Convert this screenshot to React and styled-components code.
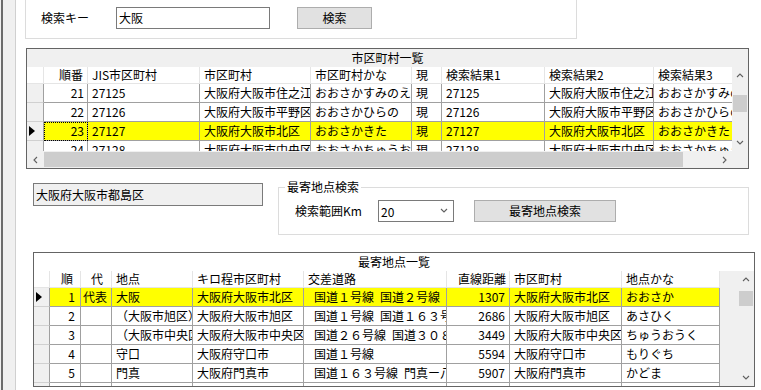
import React from 'react';
import styled, { createGlobalStyle } from 'styled-components';

const GlobalStyle = createGlobalStyle`
  html, body {
    margin: 0;
    padding: 0;
    background: #fff;
  }
  body {
    font-family: "Noto Sans CJK JP", "Noto Sans", sans-serif;
    font-size: 12px;
    color: #000;
  }
  * {
    box-sizing: border-box;
  }
`;

const Window = styled.div`
  display: flex;
  width: 761px;
  height: 390px;
  overflow: hidden;
  background: #fff;
`;

const SideStrip = styled.div`
  flex: 0 0 16px;
  background: linear-gradient(
    to right,
    #f0f0f0 0 1px,
    #6b6b6b 1px 3px,
    #f0f0f0 3px 15px,
    #d0d0d0 15px 16px
  );
`;

const Content = styled.div`
  flex: 1;
  display: flex;
  flex-direction: column;
  align-items: flex-start;
`;

/* ---------- top search group ---------- */

const KeyGroup = styled.div`
  margin-left: 9px;
  width: 552px;
  height: 39px;
  border: 1px solid #dcdcdc;
  border-top: none;
  display: flex;
  align-items: flex-start;
  padding: 7px 0 0 15px;
`;

const FieldLabel = styled.div`
  flex: 0 0 ${p => p.$width}px;
  line-height: 22px;
  white-space: nowrap;
`;

const TextBox = styled.div`
  width: ${p => p.$width}px;
  height: ${p => p.$height || 22}px;
  margin-top: ${p => p.$top || 0}px;
  border: 1px solid #7a7a7a;
  background: ${p => (p.$readOnly ? '#f0f0f0' : '#fff')};
  padding-left: 2px;
  line-height: ${p => (p.$height || 22) - 2}px;
  white-space: nowrap;
  overflow: hidden;
`;

const Button = styled.div`
  width: ${p => p.$width}px;
  height: 22px;
  margin-left: ${p => p.$gap}px;
  background: #e1e1e1;
  border: 1px solid #adadad;
  text-align: center;
  line-height: 20px;
  white-space: nowrap;
`;

/* ---------- data grid ---------- */

const Frame = styled.div`
  margin-left: ${p => p.$left}px;
  margin-top: ${p => p.$top}px;
  width: ${p => p.$width}px;
  height: ${p => p.$height}px;
  border: 1px solid #646464;
  display: flex;
  flex-direction: column;
  overflow: hidden;
  background: #f0f0f0;
`;

const TitleBand = styled.div`
  flex: 0 0 ${p => p.$h}px;
  background: ${p => p.$bg};
  text-align: center;
  line-height: ${p => p.$h}px;
`;

const GridBody = styled.div`
  flex: 1;
  min-height: 0;
  display: grid;
  grid-template-columns: 1fr 16px;
  grid-template-rows: ${p => (p.$hasH ? '1fr 17px' : '1fr')};
`;

const Viewport = styled.div`
  overflow: hidden;
  min-width: 0;
  min-height: 0;
`;

const Row = styled.div`
  display: grid;
  width: max-content;
  grid-template-columns: ${p => p.$cols};
`;

const HeadCell = styled.div`
  height: ${p => p.$h}px;
  line-height: ${p => p.$h - 1}px;
  background: #fff;
  border-right: 1px solid #e5e5e5;
  border-bottom: 1px solid #e5e5e5;
  text-align: ${p => p.$align || 'left'};
  padding: ${p => (p.$align === 'right' ? `0 ${p.$pad ?? 4}px 0 0` : '0 0 0 4px')};
  white-space: nowrap;
  overflow: hidden;
`;

const RowHead = styled.div`
  height: 19px;
  background: #f0f0f0;
  border-right: 1px solid #a0a0a0;
  border-bottom: 1px solid #d0d0d0;
  display: flex;
  align-items: center;
  padding-left: 2px;
`;

const Cell = styled.div`
  height: 19px;
  line-height: 18px;
  background: ${p => (p.$selected ? '#ffff00' : '#fff')};
  border-right: 1px solid #a0a0a0;
  border-bottom: 1px solid #a0a0a0;
  text-align: ${p => p.$align || 'left'};
  padding: ${p => (p.$align === 'right' ? `0 ${p.$pad ?? 3}px 0 0` : '0 0 0 4px')};
  white-space: pre;
  overflow: hidden;
  outline: ${p => (p.$focus ? '1px dotted #000' : 'none')};
  outline-offset: -1px;
`;

/* ---------- scroll bars ---------- */

const VBar = styled.div`
  display: flex;
  flex-direction: column;
  background: #f0f0f0;
  min-height: 0;
`;

const HBar = styled.div`
  display: flex;
  background: #f0f0f0;
  min-width: 0;
`;

const ArrowButton = styled.div`
  flex: 0 0 17px;
  display: flex;
  align-items: center;
  justify-content: center;
`;

const VTrack = styled.div`
  flex: 1;
  padding: ${p => p.$offset}px 1px 0;
`;

const HTrack = styled.div`
  flex: 1;
  padding: 1px 0 1px ${p => p.$offset}px;
`;

const Thumb = styled.div`
  background: #cdcdcd;
  width: ${p => (p.$horizontal ? `${p.$size}px` : '100%')};
  height: ${p => (p.$horizontal ? '100%' : `${p.$size}px`)};
`;

const Corner = styled.div`
  background: #f0f0f0;
`;

const Chevron = ({ dir }) => {
  const pts = {
    up: '1,5 4,2 7,5',
    down: '1,2 4,5 7,2',
    left: '5,1 2,4 5,7',
    right: '3,1 6,4 3,7',
  }[dir];
  return (
    <svg width="8" height="8" viewBox="0 0 8 8">
      <polyline points={pts} fill="none" stroke="#606060" strokeWidth="1.1" />
    </svg>
  );
};

const Marker = () => (
  <svg width="6" height="10" viewBox="0 0 6 10">
    <polygon points="0,0 6,5 0,10" fill="#000" />
  </svg>
);

function VScrollBar({ offset, size }) {
  return (
    <VBar>
      <ArrowButton><Chevron dir="up" /></ArrowButton>
      <VTrack $offset={offset}><Thumb $size={size} /></VTrack>
      <ArrowButton><Chevron dir="down" /></ArrowButton>
    </VBar>
  );
}

function HScrollBar({ offset, size }) {
  return (
    <HBar>
      <ArrowButton><Chevron dir="left" /></ArrowButton>
      <HTrack $offset={offset}><Thumb $horizontal $size={size} /></HTrack>
      <ArrowButton><Chevron dir="right" /></ArrowButton>
    </HBar>
  );
}

function DataGrid({
  title, titleBg, titleHeight, headHeight, rowHeadWidth, columns, rows,
  selected, focusKey, left, top, width, height, vThumb, hThumb,
}) {
  const cols = [rowHeadWidth, ...columns.map(c => c.width)].map(w => `${w}px`).join(' ');
  return (
    <Frame $left={left} $top={top} $width={width} $height={height}>
      <TitleBand $bg={titleBg} $h={titleHeight}>{title}</TitleBand>
      <GridBody $hasH={!!hThumb}>
        <Viewport>
          <Row $cols={cols}>
            <HeadCell $h={headHeight} />
            {columns.map(c => (
              <HeadCell key={c.key} $h={headHeight} $align={c.align} $pad={c.headPad}>
                {c.label}
              </HeadCell>
            ))}
          </Row>
          {rows.map((r, i) => (
            <Row key={i} $cols={cols}>
              <RowHead>{i === selected && <Marker />}</RowHead>
              {columns.map(c => (
                <Cell
                  key={c.key}
                  $align={c.align}
                  $pad={c.pad}
                  $selected={i === selected}
                  $focus={i === selected && c.key === focusKey}
                >
                  {r[c.key] || ''}
                </Cell>
              ))}
            </Row>
          ))}
        </Viewport>
        <VScrollBar offset={vThumb.offset} size={vThumb.size} />
        {hThumb && <HScrollBar offset={hThumb.offset} size={hThumb.size} />}
        {hThumb && <Corner />}
      </GridBody>
    </Frame>
  );
}

/* ---------- nearest point group ---------- */

const MidRow = styled.div`
  display: flex;
  align-items: flex-start;
  margin: 11px 0 0 17px;
`;

const GroupBox = styled.fieldset`
  margin: 0 0 0 15px;
  width: 471px;
  border: 1px solid #dcdcdc;
  padding: 0 0 12px 6px;
  min-inline-size: 0;
`;

const GroupTitle = styled.legend`
  padding: 0 2px;
  line-height: 14px;
  font-size: 12px;
`;

const GroupRow = styled.div`
  display: flex;
  align-items: center;
  margin: 6px 0 0 10px;
`;

const Combo = styled.div`
  width: 76px;
  height: 22px;
  border: 1px solid #7a7a7a;
  background: #fff;
  display: flex;
  align-items: center;
  justify-content: space-between;
  padding: 0 5px 0 2px;
`;

/* ---------- data ---------- */

const cityColumns = [
  { key: 'no', label: '順番', width: 44, align: 'right', pad: 3, headPad: 4 },
  { key: 'jis', label: 'JIS市区町村', width: 112 },
  { key: 'city', label: '市区町村', width: 111 },
  { key: 'kana', label: '市区町村かな', width: 101 },
  { key: 'cur', label: '現', width: 30 },
  { key: 'r1', label: '検索結果1', width: 103 },
  { key: 'r2', label: '検索結果2', width: 109 },
  { key: 'r3', label: '検索結果3', width: 100 },
];

const cityRows = [
  { no: '21', jis: '27125', city: '大阪府大阪市住之江区', kana: 'おおさかすみのえく', cur: '現', r1: '27125', r2: '大阪府大阪市住之江区', r3: 'おおさかすみのえく' },
  { no: '22', jis: '27126', city: '大阪府大阪市平野区', kana: 'おおさかひらの', cur: '現', r1: '27126', r2: '大阪府大阪市平野区', r3: 'おおさかひらの' },
  { no: '23', jis: '27127', city: '大阪府大阪市北区', kana: 'おおさかきた', cur: '現', r1: '27127', r2: '大阪府大阪市北区', r3: 'おおさかきた' },
  { no: '24', jis: '27128', city: '大阪府大阪市中央区', kana: 'おおさかちゅうおう', cur: '現', r1: '27128', r2: '大阪府大阪市中央区', r3: 'おおさかちゅうおう' },
];

const pointColumns = [
  { key: 'no', label: '順', width: 31, align: 'right', pad: 5, headPad: 7 },
  { key: 'rep', label: '代', width: 31, align: 'right', pad: 4, headPad: 8 },
  { key: 'point', label: '地点', width: 81 },
  { key: 'kmCity', label: 'キロ程市区町村', width: 111 },
  { key: 'road', label: '交差道路', width: 143 },
  { key: 'dist', label: '直線距離', width: 63, align: 'right', pad: 4, headPad: 3 },
  { key: 'city', label: '市区町村', width: 112 },
  { key: 'kana', label: '地点かな', width: 98 },
];

const pointRows = [
  { no: '1', rep: '代表', point: '大阪', kmCity: '大阪府大阪市北区', road: '\u2002国道１号線\u2002国道２号線', dist: '1307', city: '大阪府大阪市北区', kana: 'おおさか' },
  { no: '2', point: '（大阪市旭区）', kmCity: '大阪府大阪市旭区', road: '\u2002国道１号線\u2002国道１６３号線', dist: '2686', city: '大阪府大阪市旭区', kana: 'あさひく' },
  { no: '3', point: '（大阪市中央区）', kmCity: '大阪府大阪市中央区', road: '\u2002国道２６号線\u2002国道３０８号線', dist: '3449', city: '大阪府大阪市中央区', kana: 'ちゅうおうく' },
  { no: '4', point: '守口', kmCity: '大阪府守口市', road: '\u2002国道１号線', dist: '5594', city: '大阪府守口市', kana: 'もりぐち' },
  { no: '5', point: '門真', kmCity: '大阪府門真市', road: '\u2002国道１６３号線\u2002門真ー八尾線', dist: '5907', city: '大阪府門真市', kana: 'かどま' },
  {},
];

export default function App() {
  return (
    <>
      <GlobalStyle />
      <Window>
        <SideStrip />
        <Content>
          <KeyGroup>
            <FieldLabel $width={75}>検索キー</FieldLabel>
            <TextBox $width={154}>大阪</TextBox>
            <Button $width={75} $gap={27}>検索</Button>
          </KeyGroup>

          <DataGrid
            title="市区町村一覧"
            titleBg="#f0f0f0"
            titleHeight={18}
            headHeight={17}
            rowHeadWidth={17}
            columns={cityColumns}
            rows={cityRows}
            selected={2}
            focusKey="no"
            left={10}
            top={9}
            width={723}
            height={121}
            vThumb={{ offset: 11, size: 17 }}
            hThumb={{ offset: 0, size: 639 }}
          />

          <MidRow>
            <TextBox $width={230} $height={23} $top={3} $readOnly>大阪府大阪市都島区</TextBox>
            <GroupBox>
              <GroupTitle>最寄地点検索</GroupTitle>
              <GroupRow>
                <FieldLabel $width={83}>検索範囲Km</FieldLabel>
                <Combo>
                  <span>20</span>
                  <Chevron dir="down" />
                </Combo>
                <Button $width={142} $gap={20}>最寄地点検索</Button>
              </GroupRow>
            </GroupBox>
          </MidRow>

          <DataGrid
            title="最寄地点一覧"
            titleBg="#fff"
            titleHeight={18}
            headHeight={17}
            rowHeadWidth={16}
            columns={pointColumns}
            rows={pointRows}
            selected={0}
            left={17}
            top={17}
            width={722}
            height={135}
            vThumb={{ offset: 3, size: 15 }}
          />
        </Content>
      </Window>
    </>
  );
}
